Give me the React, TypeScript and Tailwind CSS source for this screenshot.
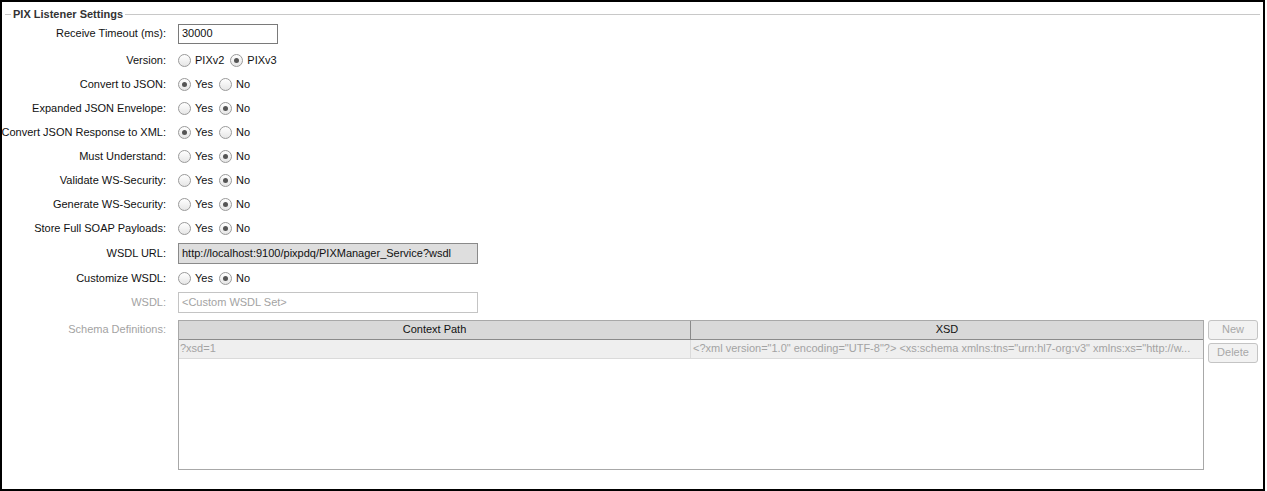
import React from 'react';

type RadioOpt = { label: string; checked: boolean };

function Radio({ label, checked }: RadioOpt) {
  return (
    <span className="flex items-center">
      <span className="flex h-[13px] w-[13px] items-center justify-center rounded-full border border-[#9a9a9a] bg-gradient-to-b from-white to-[#e6e6e6]">
        {checked && <span className="h-[5px] w-[5px] rounded-full bg-[#555]" />}
      </span>
      <span className="ml-[4px] mr-[6px]">{label}</span>
    </span>
  );
}

function Row({
  label,
  children,
  h = 'h-[24px]',
  disabled = false,
  className = '',
}: {
  label: string;
  children: React.ReactNode;
  h?: string;
  disabled?: boolean;
  className?: string;
}) {
  return (
    <div className={`flex items-center ${h} ${className}`}>
      <div
        className={`flex w-[164px] shrink-0 justify-end whitespace-nowrap ${disabled ? 'text-[#a3a3a3]' : 'text-[#111]'}`}
      >
        <span>{label}</span>
      </div>
      <div className="ml-[12px] flex items-center">{children}</div>
    </div>
  );
}

const yesNo = (yes: boolean) => (
  <>
    <Radio label="Yes" checked={yes} />
    <Radio label="No" checked={!yes} />
  </>
);

export default function App() {
  const options: { label: string; yes: boolean }[] = [
    { label: 'Convert to JSON:', yes: true },
    { label: 'Expanded JSON Envelope:', yes: false },
    { label: 'Convert JSON Response to XML:', yes: true },
    { label: 'Must Understand:', yes: false },
    { label: 'Validate WS-Security:', yes: false },
    { label: 'Generate WS-Security:', yes: false },
    { label: 'Store Full SOAP Payloads:', yes: false },
  ];

  return (
    <div
      className="h-[491px] w-[1267px] bg-white text-[11px] text-[#111]"
      style={{ fontFamily: '"Liberation Sans", Arial, sans-serif' }}
    >
      <div className="h-[491px] w-[1265px] border-2 border-black">
        {/* group title */}
        <div className="mt-[4px] flex items-center">
          <div className="ml-[3px] h-px w-[6px] bg-[#c8c8c8]" />
          <span className="mx-[2px] font-bold text-[#333]">PIX Listener Settings</span>
          <div className="mr-[3px] h-px flex-1 bg-[#c8c8c8]" />
        </div>

        <div>
          <Row label="Receive Timeout (ms):" h="h-[22px]">
            <div className="flex h-[20px] w-[100px] items-center border border-[#7a7a7a] bg-white px-[3px]">
              30000
            </div>
          </Row>

          <Row label="Version:" className="mt-[4px]">
            <Radio label="PIXv2" checked={false} />
            <Radio label="PIXv3" checked={true} />
          </Row>

          {options.map((o) => (
            <Row key={o.label} label={o.label}>
              {yesNo(o.yes)}
            </Row>
          ))}

          <Row label="WSDL URL:" className="mt-[1px]">
            <div className="flex h-[21px] w-[300px] items-center border border-[#8a8a8a] bg-[#dedede] px-[3px]">
              http://localhost:9100/pixpdq/PIXManager_Service?wsdl
            </div>
          </Row>

          <Row label="Customize WSDL:" className="mt-[1px]">
            {yesNo(false)}
          </Row>

          <Row label="WSDL:" disabled>
            <div className="flex h-[21px] w-[300px] items-center border border-[#c4c4c4] bg-white px-[3px] text-[#a3a3a3]">
              &lt;Custom WSDL Set&gt;
            </div>
          </Row>

          {/* schema definitions */}
          <div className="mt-[5px] flex items-start">
            <div className="w-[164px] shrink-0 pt-[1px] text-right text-[#a3a3a3]">Schema Definitions:</div>
            <div className="ml-[12px] h-[150px] w-[1026px] border border-[#a8a8a8] bg-white">
              <div className="flex h-[19px] border-b border-[#8a8a8a] bg-[#d8d8d8] text-[#111]">
                <div className="flex w-[512px] items-center justify-center border-r border-[#8a8a8a]">Context Path</div>
                <div className="flex flex-1 items-center justify-center">XSD</div>
              </div>
              <div className="flex h-[19px] border-b border-[#dadada] bg-[#efefef] text-[#a3a3a3]">
                <div className="flex w-[512px] items-center border-r border-[#dadada] pl-[1px]">?xsd=1</div>
                <div className="flex flex-1 items-center overflow-hidden whitespace-nowrap pl-[2px]">
                  &lt;?xml version="1.0" encoding="UTF-8"?&gt; &lt;xs:schema xmlns:tns="urn:hl7-org:v3" xmlns:xs="http://w...
                </div>
              </div>
            </div>
            <div className="ml-[4px] flex flex-col gap-[3px]">
              <button className="h-[20px] w-[50px] rounded-[3px] border border-[#c4c4c4] bg-[#f2f2f2] text-[#a8a8a8]">
                New
              </button>
              <button className="h-[20px] w-[50px] rounded-[3px] border border-[#c4c4c4] bg-[#f2f2f2] text-[#a8a8a8]">
                Delete
              </button>
            </div>
          </div>
        </div>
      </div>
    </div>
  );
}
